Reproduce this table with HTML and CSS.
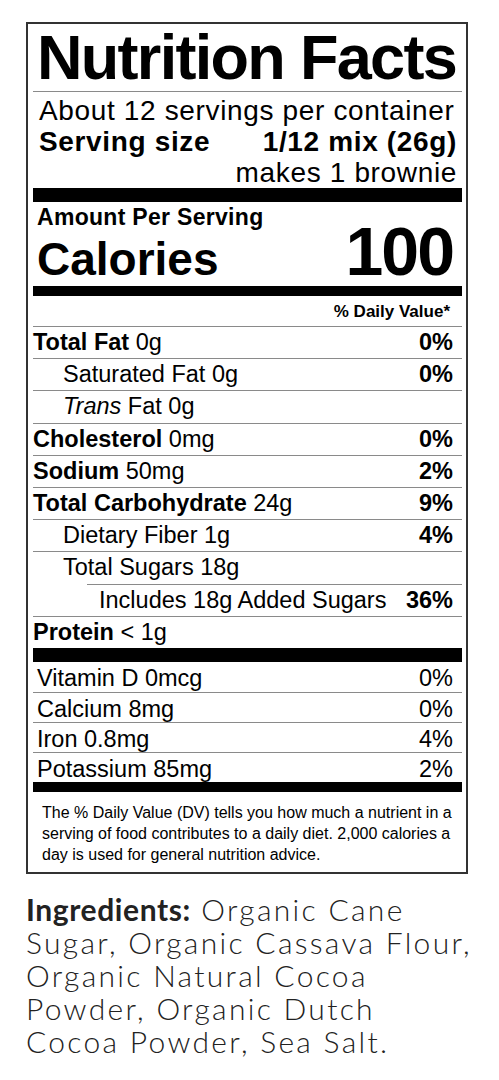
FILE: index.html
```html
<!DOCTYPE html>
<html lang="en">
<head>
  <meta charset="UTF-8" />
  <meta name="viewport" content="width=device-width, initial-scale=1.0"/>
  <title>Nutrition Facts</title>
  <link rel="stylesheet" href="styles.css">
</head>
<body>

<div class="label">
  <h1 class="title">Nutrition Facts</h1>

  <div class="servings">
    <p>About 12 servings per container</p>
    <div class="serving-size"><span>Serving size</span><span>1/12 mix (26g)</span></div>
    <p class="makes">makes 1 brownie</p>
  </div>

  <div class="bar bar-thick"></div>

  <div class="calories">
    <div class="amount">Amount Per Serving</div>
    <div class="cal-row">
      <span class="cal-label">Calories</span>
      <span class="cal-value">100</span>
    </div>
  </div>

  <div class="bar bar-medium"></div>

  <div class="dv-head">% Daily Value*</div>

  <ul class="rows">
    <li><span><b>Total Fat</b> 0g</span><b>0%</b></li>
    <li class="sub"><span>Saturated Fat 0g</span><b>0%</b></li>
    <li class="sub"><span><i>Trans</i> Fat 0g</span></li>
    <li><span><b>Cholesterol</b> 0mg</span><b>0%</b></li>
    <li><span><b>Sodium</b> 50mg</span><b>2%</b></li>
    <li><span><b>Total Carbohydrate</b> 24g</span><b>9%</b></li>
    <li class="sub"><span>Dietary Fiber 1g</span><b>4%</b></li>
    <li class="sub"><span>Total Sugars 18g</span></li>
    <li class="added"><span>Includes 18g Added Sugars</span><b>36%</b></li>
    <li><span><b>Protein</b> &lt; 1g</span></li>
  </ul>

  <div class="bar bar-thick"></div>

  <ul class="vitamins">
    <li><span>Vitamin D 0mcg</span><span>0%</span></li>
    <li><span>Calcium 8mg</span><span>0%</span></li>
    <li><span>Iron 0.8mg</span><span>4%</span></li>
    <li><span>Potassium 85mg</span><span>2%</span></li>
  </ul>

  <div class="bar bar-medium"></div>

  <p class="footnote">The % Daily Value (DV) tells you how much a nutrient in a serving of food contributes to a daily diet. 2,000 calories a day is used for general nutrition advice.</p>
</div>

<p class="ingredients"><strong>Ingredients:</strong> Organic Cane Sugar, Organic Cassava Flour, Organic Natural Cocoa Powder, Organic Dutch Cocoa Powder, Sea Salt.</p>

</body>
</html>
```

FILE: styles.css
```css
:root {
  --ink: #000;
  --rule: #8a8a8a;
  --frame: #333;
}

* {
  box-sizing: border-box;
  margin: 0;
  padding: 0;
}

body {
  font-family: 'Liberation Sans', Arial, sans-serif;
  background: #fff;
  color: var(--ink);
  padding: 22px 0 0 26px;
}

.label {
  width: 442px;
  border: 2px solid var(--frame);
  padding: 0 4px 0 5px;
}

.title {
  height: 68px;
  font-size: 63px;
  line-height: 67px;
  font-weight: bold;
  letter-spacing: -1.7px;
  padding-left: 4px;
  border-bottom: 1px solid var(--rule);
}

.servings {
  height: 96px;
  padding: 3px 5px 0 6px;
  font-size: 28px;
  line-height: 31px;
  letter-spacing: 0.65px;
}

.serving-size {
  display: flex;
  justify-content: space-between;
  font-weight: bold;
}

.makes {
  text-align: right;
}

.bar {
  background: var(--ink);
}

.bar-thick {
  height: 14px;
}

.bar-medium {
  height: 10px;
}

/* Calories */
.calories {
  height: 84px;
  padding: 2px 9px 0 4px;
  font-weight: bold;
}

.amount {
  font-size: 23px;
  line-height: 26px;
  letter-spacing: 0.3px;
}

.cal-row {
  display: flex;
  justify-content: space-between;
  align-items: baseline;
}

.cal-label {
  font-size: 46px;
  line-height: 40px;
}

.cal-value {
  font-size: 68px;
  line-height: 42px;
  letter-spacing: -2px;
}

.dv-head {
  height: 30px;
  text-align: right;
  font-size: 17px;
  font-weight: bold;
  line-height: 29px;
  padding: 1px 12px 0 0;
}

/* Nutrient rows */
.rows,
.vitamins {
  list-style: none;
}

.rows li {
  display: flex;
  justify-content: space-between;
  height: 32.2px;
  border-top: 1px solid var(--rule);
  font-size: 23.5px;
  line-height: 29px;
  padding: 1px 9px 0 0;
}

.rows li.sub {
  padding-left: 30px;
}

.rows li.added {
  border-top: none;
  padding: 2px 9px 0 66px;
  background: linear-gradient(var(--rule), var(--rule)) no-repeat 54px 0 / calc(100% - 54px) 1px;
}

.vitamins li {
  display: flex;
  justify-content: space-between;
  height: 30px;
  font-size: 23.5px;
  line-height: 28px;
  padding: 2px 9px 0 4px;
}

.vitamins li + li {
  border-top: 1px solid var(--rule);
}

.footnote {
  font-size: 16px;
  line-height: 21px;
  padding: 10px 8px 7px 9px;
}

/* Ingredients */
.ingredients {
  width: 446px;
  margin-top: 19px;
  font-family: Lato, 'Open Sans', sans-serif;
  font-weight: 300;
  font-size: 30px;
  line-height: 33px;
  letter-spacing: 2.3px;
  color: #222;
}

.ingredients strong {
  font-weight: bold;
  letter-spacing: 0.6px;
}
```
